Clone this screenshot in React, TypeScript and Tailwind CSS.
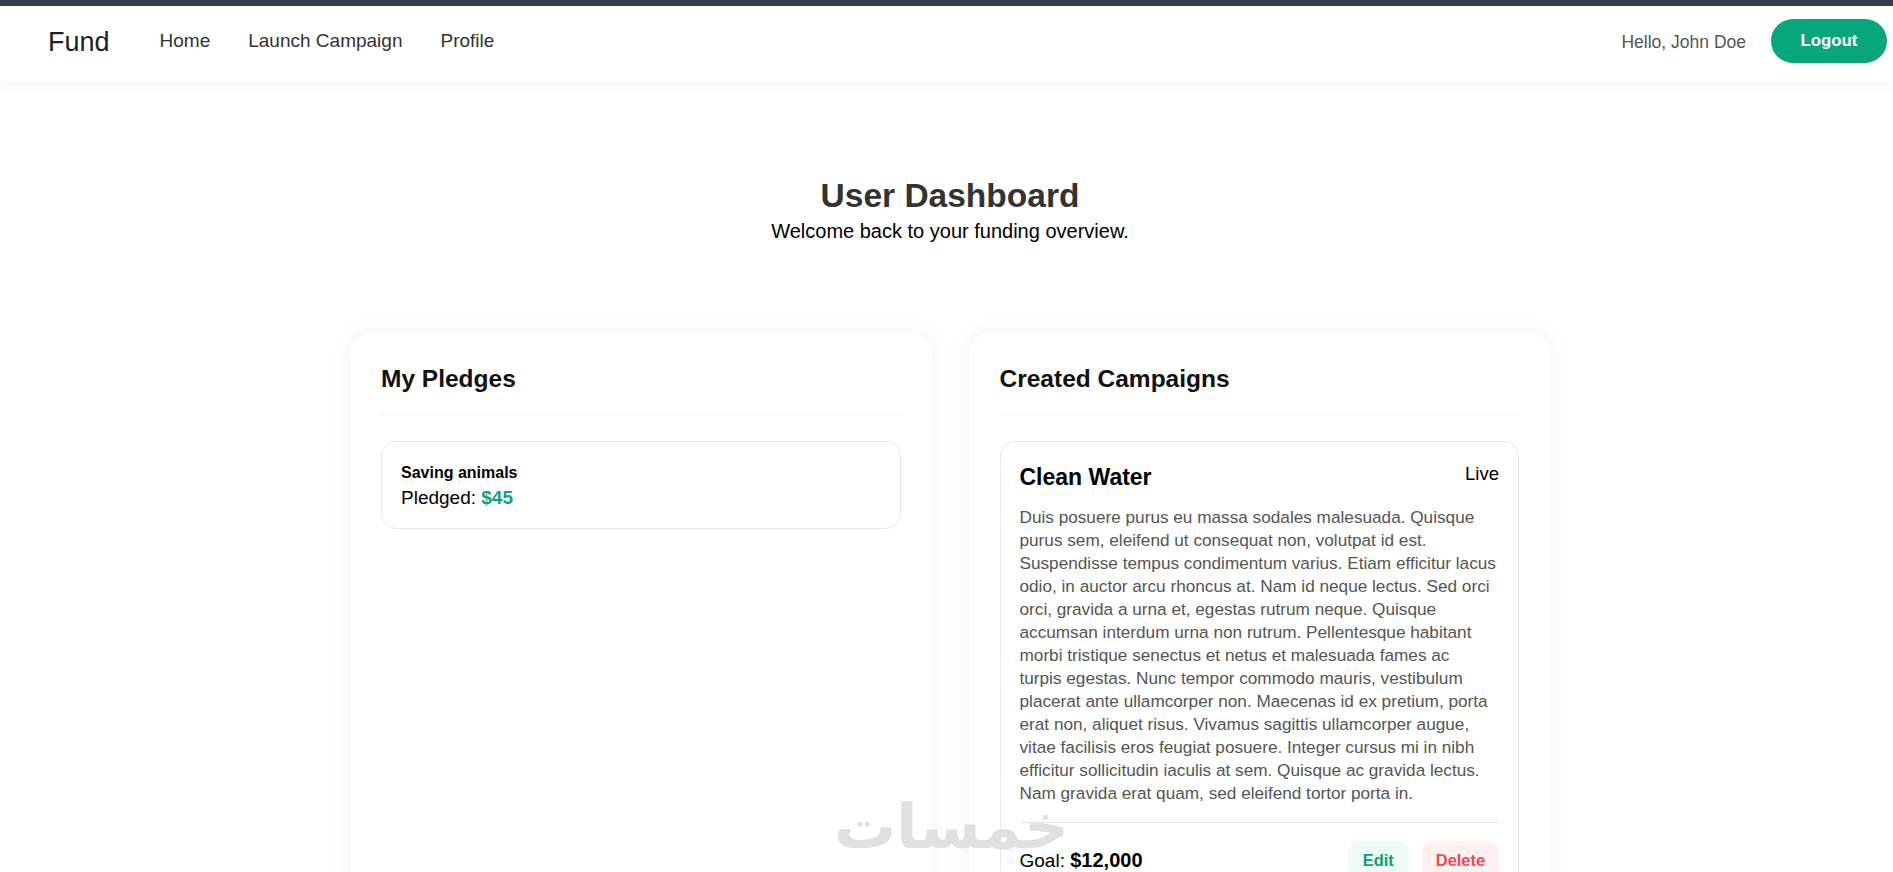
const descriptionLines = [
  "Duis posuere purus eu massa sodales malesuada. Quisque",
  "purus sem, eleifend ut consequat non, volutpat id est.",
  "Suspendisse tempus condimentum varius. Etiam efficitur lacus",
  "odio, in auctor arcu rhoncus at. Nam id neque lectus. Sed orci",
  "orci, gravida a urna et, egestas rutrum neque. Quisque",
  "accumsan interdum urna non rutrum. Pellentesque habitant",
  "morbi tristique senectus et netus et malesuada fames ac",
  "turpis egestas. Nunc tempor commodo mauris, vestibulum",
  "placerat ante ullamcorper non. Maecenas id ex pretium, porta",
  "erat non, aliquet risus. Vivamus sagittis ullamcorper augue,",
  "vitae facilisis eros feugiat posuere. Integer cursus mi in nibh",
  "efficitur sollicitudin iaculis at sem. Quisque ac gravida lectus.",
  "Nam gravida erat quam, sed eleifend tortor porta in.",
];

function NavBar() {
  return (
    <div className="border-t-[6px] border-[#353d4d] bg-white shadow-[0_3px_12px_rgba(0,0,0,0.05)] relative z-10">
      <nav className="h-[76px] flex items-center justify-between pl-[48px] pr-[6px] pb-[6px]">
        <div className="flex items-center">
          <a className="text-[27px] text-[#222] leading-none mt-[2px]">Fund</a>
          <div className="flex items-center gap-[38px] ml-[50px] text-[19px] font-medium text-[#333]">
            <a>Home</a>
            <a>Launch Campaign</a>
            <a>Profile</a>
          </div>
        </div>
        <div className="flex items-center gap-[25px]">
          <span className="text-[17.5px] text-[#555] mt-[2px]">Hello, John Doe</span>
          <button className="w-[116px] h-[44px] rounded-full bg-[#07a67b] text-white font-bold text-[16.8px]">
            Logout
          </button>
        </div>
      </nav>
    </div>
  );
}

function PledgesCard() {
  return (
    <div className="bg-white rounded-[22px] shadow-[0_0_22px_rgba(0,0,0,0.06)] px-[31px] pt-[32px] pb-[30px]">
      <h2 className="text-[24.5px] leading-[30px] font-bold text-[#111] pb-[20px] border-b border-[#f1f2f4]">
        My Pledges
      </h2>
      <div className="mt-[26px] border border-[#e7e8eb] rounded-[15px] px-[19px] pt-[21px] pb-[18px]">
        <div className="text-[16px] leading-[20px] font-bold text-black">Saving animals</div>
        <div className="mt-[3px] text-[19px] leading-[24px] text-black">
          Pledged: <span className="font-bold text-[#10a37f]">$45</span>
        </div>
      </div>
    </div>
  );
}

function CampaignsCard() {
  return (
    <div className="bg-white rounded-[22px] shadow-[0_0_22px_rgba(0,0,0,0.06)] px-[31px] pt-[32px] pb-[30px]">
      <h2 className="text-[24.5px] leading-[30px] font-bold text-[#111] pb-[20px] border-b border-[#f1f2f4]">
        Created Campaigns
      </h2>
      <div className="mt-[26px] border border-[#e7e8eb] rounded-[15px] px-[19px] pt-[21px] pb-[20px]">
        <div className="flex items-start justify-between">
          <h3 className="text-[23px] leading-[28px] font-bold text-black">Clean Water</h3>
          <span className="text-[18.5px] leading-[22px] text-black">Live</span>
        </div>
        <p className="mt-[15px] text-[17.2px] leading-[23px] text-[#555]">
          {descriptionLines.map((line) => (
            <span key={line} className="block whitespace-nowrap">
              {line}
            </span>
          ))}
        </p>
        <div className="mt-[17px] border-t border-[#e7e8eb] pt-[18px] flex items-center justify-between">
          <div className="text-[19px] text-black">
            Goal: <span className="font-bold text-[20px]">$12,000</span>
          </div>
          <div className="flex items-center gap-[13px]">
            <button className="h-[38px] px-[15px] rounded-[10px] bg-[#edfcf5] text-[#0f9f74] font-bold text-[16.4px]">
              Edit
            </button>
            <button className="h-[38px] px-[14px] rounded-[10px] bg-[#fff1f1] text-[#f0484d] font-bold text-[16.4px]">
              Delete
            </button>
          </div>
        </div>
      </div>
    </div>
  );
}

export default function App() {
  return (
    <div
      className="h-screen overflow-hidden bg-white relative"
      style={{ fontFamily: '"Liberation Sans", Arial, sans-serif' }}
    >
      <NavBar />
      <main className="pl-[7px]">
        <div className="mt-[94px] flex flex-col items-center">
          <h1 className="text-[33.5px] leading-[40px] font-bold text-[#333]">User Dashboard</h1>
          <p className="mt-[3px] text-[20px] leading-[24px] text-black">
            Welcome back to your funding overview.
          </p>
        </div>
        <div className="w-[1200px] mx-auto mt-[89px] grid grid-cols-2 gap-[37px]">
          <PledgesCard />
          <CampaignsCard />
        </div>
      </main>
      <div
        className="absolute left-[834px] top-[796px] text-[62px] leading-none font-bold text-[#e0e0e0] select-none pointer-events-none"
        style={{ fontFamily: '"DejaVu Sans", sans-serif' }}
        dir="rtl"
      >
        خمسات
      </div>
    </div>
  );
}
